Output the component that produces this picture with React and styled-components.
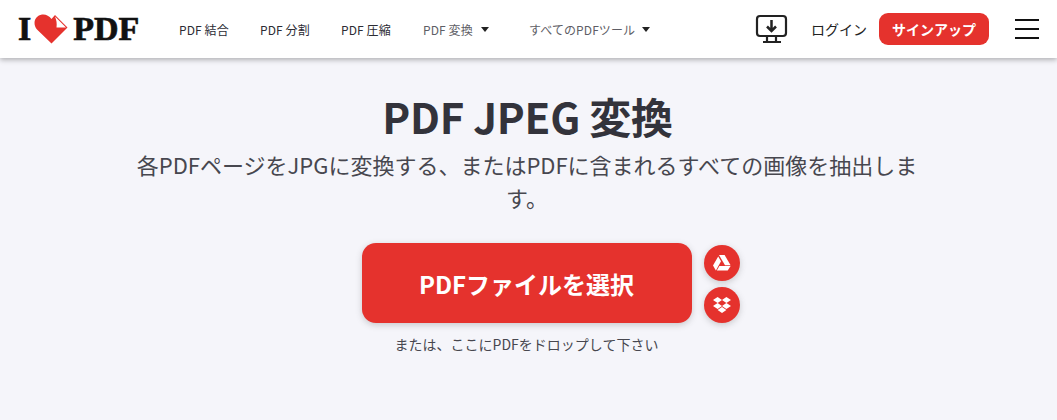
import React from 'react'
import styled, { createGlobalStyle } from 'styled-components'

const GlobalStyle = createGlobalStyle`
  html, body {
    margin: 0;
    padding: 0;
    background: #f5f5fa;
    font-family: "Noto Sans CJK JP", "Noto Sans", sans-serif;
  }
`

const Page = styled.div`
  height: 420px;
  overflow: hidden;
`

const Header = styled.header`
  align-items: center;
  background: #fff;
  box-shadow: 0 2px 5px rgba(0, 0, 0, 0.28);
  display: flex;
  height: 58px;
  padding: 0 18px;
`

const Logo = styled.a`
  align-items: center;
  color: #111;
  display: flex;
  font-family: "Liberation Serif", serif;
  font-size: 34px;
  font-weight: 700;
  -webkit-text-stroke: 0.7px #111;
  width: 161px;
`

const Nav = styled.nav`
  align-items: center;
  display: flex;
  flex: 1;
`

const NavItem = styled.a`
  align-items: center;
  color: ${p => (p.$muted ? '#5e5e66' : '#2c2c34')};
  display: flex;
  font-size: 12px;
  font-weight: 400;
  letter-spacing: 0.1px;
  width: ${p => p.$width}px;
`

const Caret = styled.span`
  border-left: 4.5px solid transparent;
  border-right: 4.5px solid transparent;
  border-top: 5px solid #222;
  margin-left: ${p => p.$gap}px;
`

const Actions = styled.div`
  align-items: center;
  display: flex;
`

const Login = styled.a`
  color: #222;
  font-size: 14px;
  font-weight: 400;
  margin: 0 12px 0 22px;
`

const Signup = styled.a`
  background: #e5322d;
  border-radius: 9px;
  color: #fff;
  font-size: 14px;
  font-weight: 700;
  line-height: 32px;
  padding: 0 13px;
`

const Burger = styled.div`
  display: flex;
  flex-direction: column;
  gap: 7px;
  margin-left: 26px;
  width: 24px;

  span {
    background: #111;
    display: block;
    height: 2px;
  }
`

const Main = styled.main`
  align-items: center;
  display: flex;
  flex-direction: column;
  padding-top: 29px;
`

const Title = styled.h1`
  color: #33333b;
  font-size: 42px;
  font-weight: 600;
  letter-spacing: -0.25px;
  line-height: 58px;
  margin: 0 2px 0 0;
`

const Subtitle = styled.h2`
  color: #47474f;
  font-size: 22px;
  font-weight: 400;
  line-height: 33px;
  margin: 3px 3px 0 0;
  text-align: center;
  width: 800px;
`

const UploadRow = styled.div`
  align-items: flex-end;
  display: flex;
  gap: 12px;
  margin-left: 44px;
  margin-top: 29px;
`

const PickButton = styled.button`
  background: #e5322d;
  border: 0;
  border-radius: 14px;
  box-shadow: 0 2px 6px rgba(72, 72, 72, 0.25);
  color: #fff;
  font-family: inherit;
  font-size: 24px;
  font-weight: 600;
  height: 80px;
  width: 330px;
`

const CloudColumn = styled.div`
  display: flex;
  flex-direction: column;
  gap: 6px;
`

const CloudButton = styled.button`
  align-items: center;
  background: #e5322d;
  border: 0;
  border-radius: 50%;
  box-shadow: 0 2px 6px rgba(72, 72, 72, 0.25);
  display: flex;
  height: 36px;
  justify-content: center;
  padding: 0;
  width: 36px;
`

const DropHint = styled.div`
  color: #47474f;
  font-size: 14px;
  line-height: 20px;
  margin: 11px 4px 0 0;
`

const HeartMark = styled.svg`
  flex: none;
  margin: 0 5px 0 3px;
`

const Heart = () => (
  <HeartMark width="34" height="30" viewBox="0 0 34 30">
    <path
      d="M17.5 29.5 L3 15.5 C-2 9.5 1 1.5 8 0.5 C11.5 0 15 1.5 17.5 5 L21 1 L33.5 13.5 Z"
      fill="#e5322d"
    />
    <path d="M21 2.5 L32 13.5 L22.5 13.5 C23 9.5 22.5 6 21 2.5 Z" fill="#fff" />
  </HeartMark>
)

const DesktopIcon = () => (
  <svg width="34" height="30" viewBox="0 0 34 30" fill="none" stroke="#222" strokeWidth="2.2">
    <rect x="2" y="2" width="29" height="20" rx="3" />
    <path d="M12 22v5M21 22v5M8 28h18" />
    <path d="M16.5 6v11M12 12.5l4.5 4.5 4.5-4.5" strokeWidth="2.5" />
  </svg>
)

const DriveIcon = () => (
  <svg width="18" height="16" viewBox="0 0 18 16" fill="#fff">
    <path d="M6 0h5.6l6 10.2h-5.6z" />
    <path d="M5.2 1.4l2.8 4.8L2.9 15.4 0 10.4z" />
    <path d="M6.4 11h11.2l-2.9 4.6H3.8z" />
  </svg>
)

const DropboxIcon = () => (
  <svg width="18" height="17" viewBox="0 0 18 17" fill="#fff">
    <path d="M4.6 0L0 3l4.6 3L9 3z" />
    <path d="M13.4 0L9 3l4.4 3L18 3z" />
    <path d="M0 9l4.6 3L9 9 4.6 6z" />
    <path d="M13.4 6L9 9l4.4 3L18 9z" />
    <path d="M4.6 13l4.4 3 4.4-3L9 10z" />
  </svg>
)

export default function App() {
  return (
    <Page>
      <GlobalStyle />
      <Header>
        <Logo>
          I<Heart />PDF
        </Logo>
        <Nav>
          <NavItem $width={81}>PDF 結合</NavItem>
          <NavItem $width={81}>PDF 分割</NavItem>
          <NavItem $width={82}>PDF 圧縮</NavItem>
          <NavItem $width={106} $muted>
            PDF 変換<Caret $gap={8} />
          </NavItem>
          <NavItem $muted>
            すべてのPDFツール<Caret $gap={7} />
          </NavItem>
        </Nav>
        <Actions>
          <DesktopIcon />
          <Login>ログイン</Login>
          <Signup>サインアップ</Signup>
          <Burger>
            <span />
            <span />
            <span />
          </Burger>
        </Actions>
      </Header>
      <Main>
        <Title>PDF JPEG 変換</Title>
        <Subtitle>各PDFページをJPGに変換する、またはPDFに含まれるすべての画像を抽出します。</Subtitle>
        <UploadRow>
          <PickButton>PDFファイルを選択</PickButton>
          <CloudColumn>
            <CloudButton>
              <DriveIcon />
            </CloudButton>
            <CloudButton>
              <DropboxIcon />
            </CloudButton>
          </CloudColumn>
        </UploadRow>
        <DropHint>または、ここにPDFをドロップして下さい</DropHint>
      </Main>
    </Page>
  )
}
